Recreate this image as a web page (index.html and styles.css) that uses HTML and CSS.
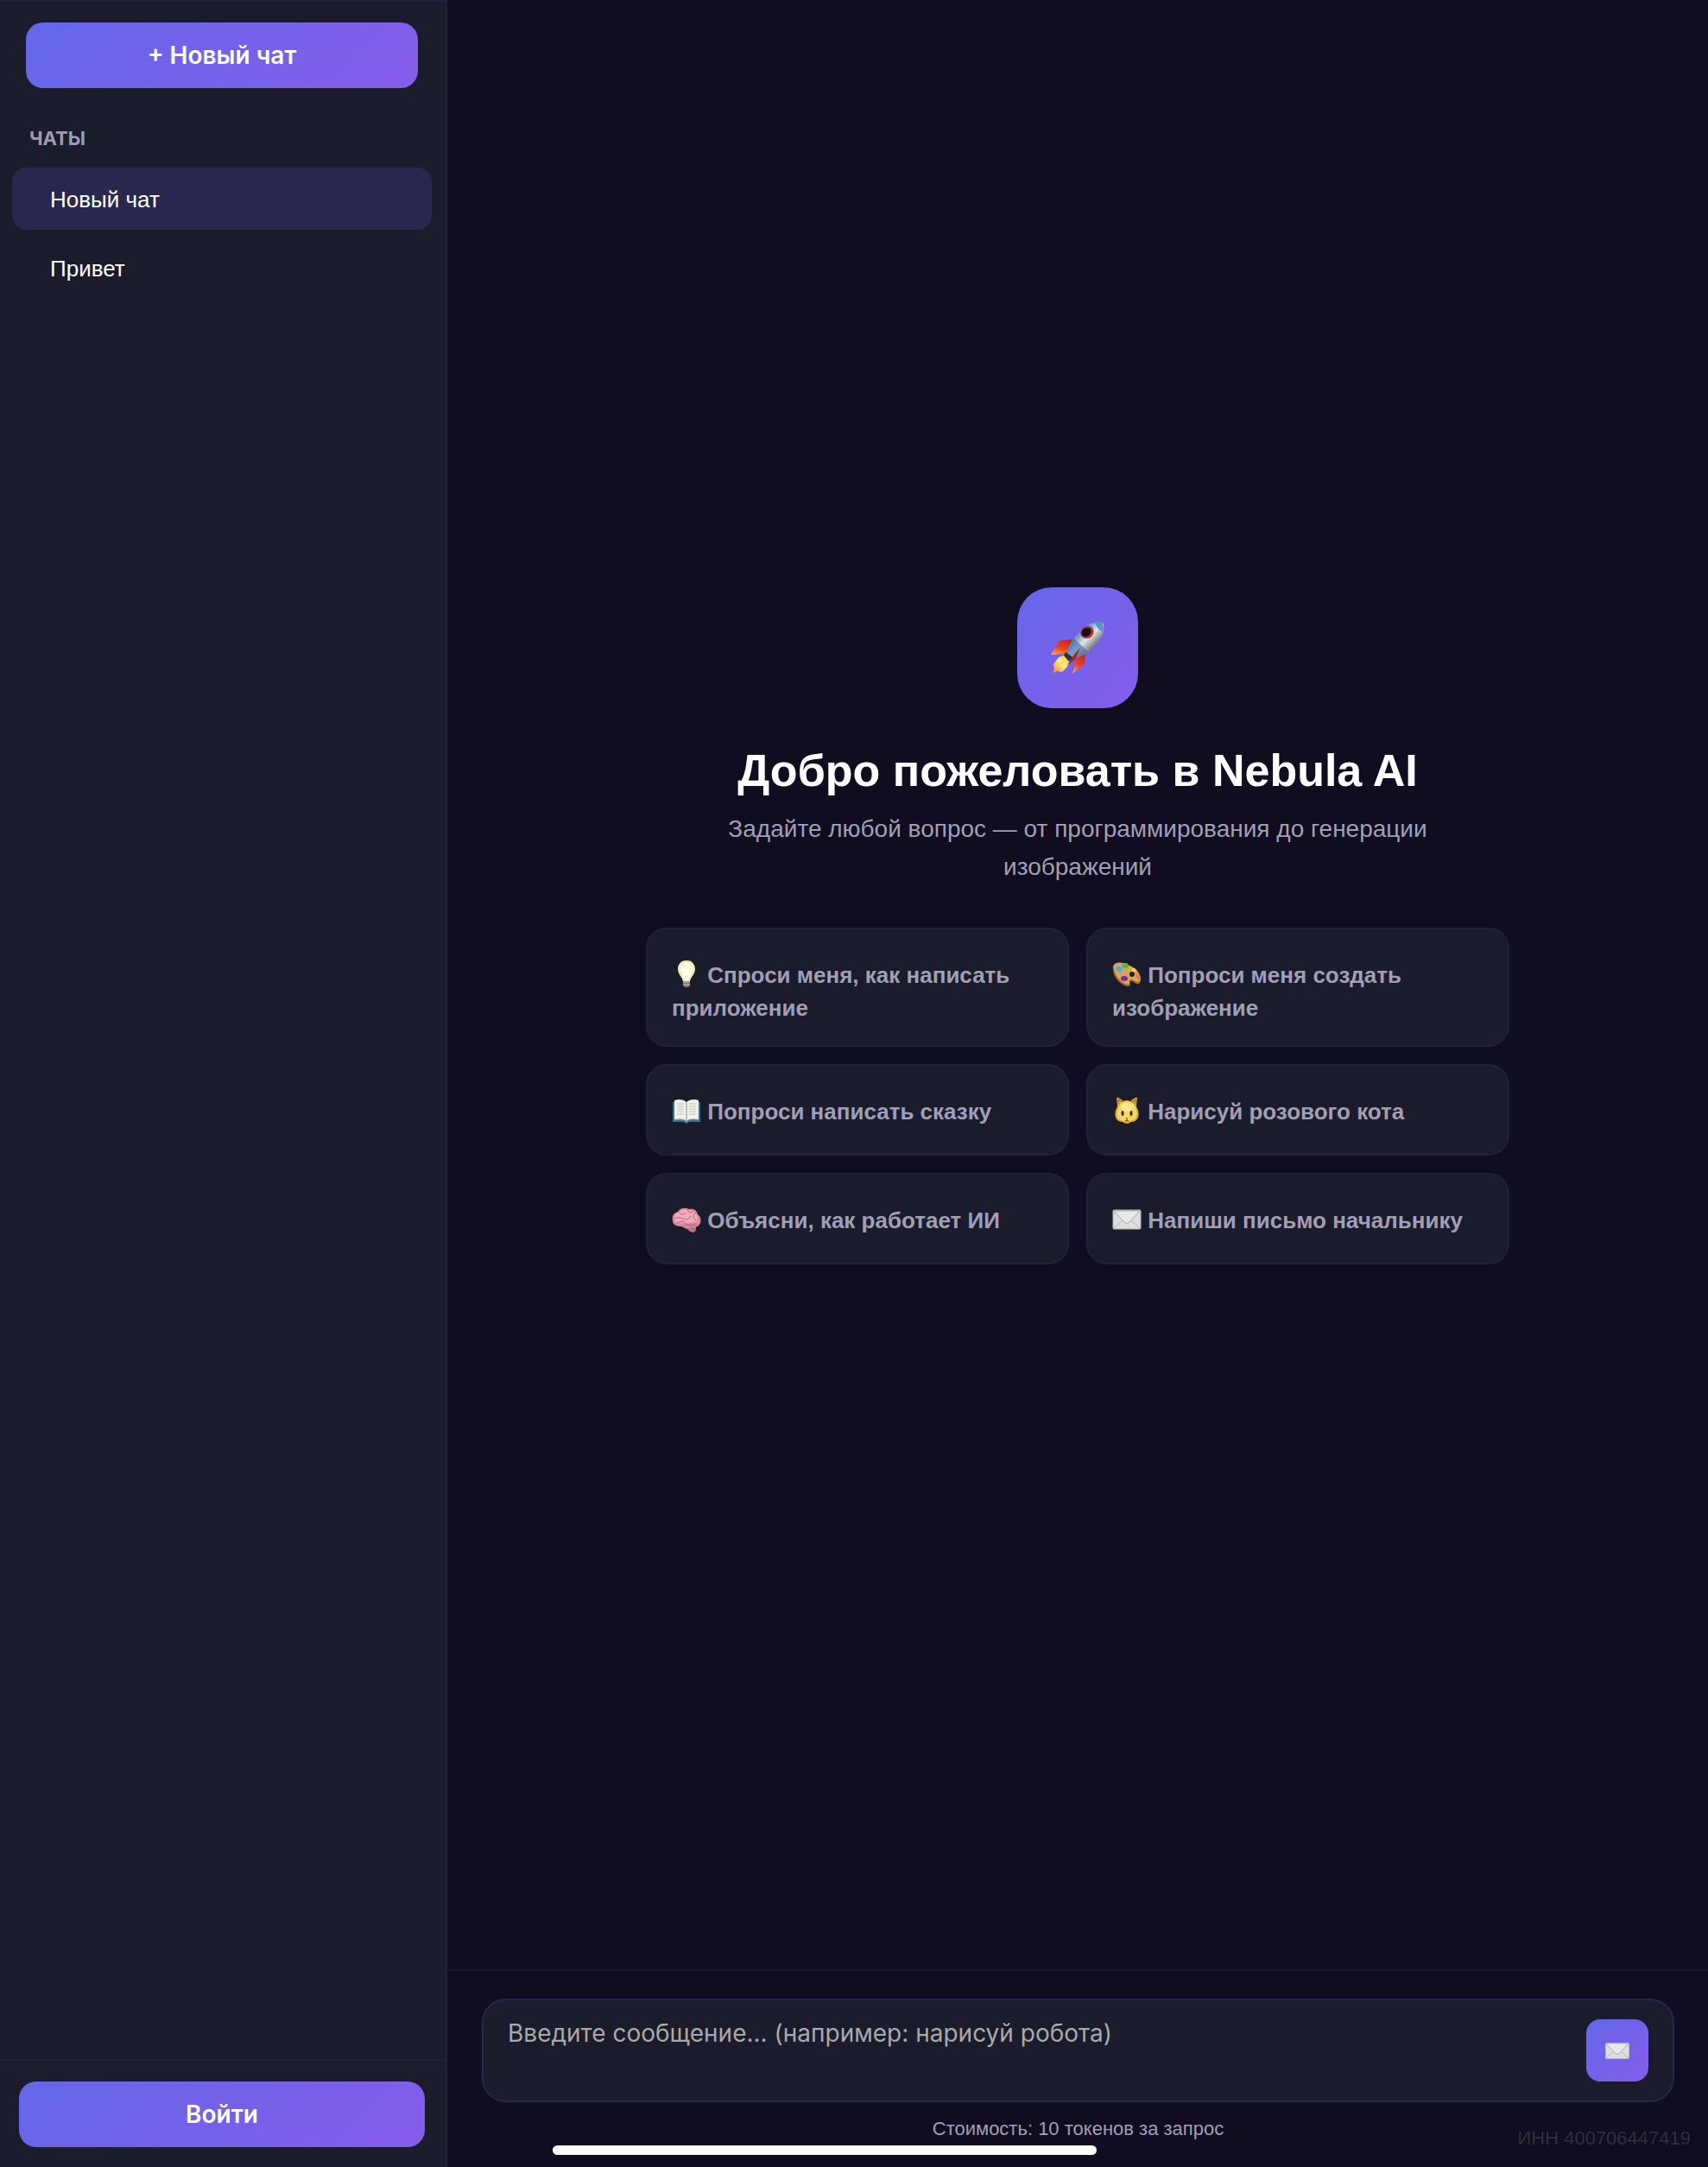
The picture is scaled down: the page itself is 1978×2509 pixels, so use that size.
FILE: index.html
```html
<!DOCTYPE html>
<html lang="ru">
  <head>
    <meta charset="UTF-8" />
    <meta name="viewport" content="width=device-width, initial-scale=1.0" />
    <title>Nebula AI</title>
    <link rel="stylesheet" href="styles.css">
  </head>
  <body>
    <aside class="sidebar">
      <button class="btn newChat" type="button">+ Новый чат</button>
      <h2 class="chatsTitle">ЧАТЫ</h2>
      <nav class="chatList">
        <button class="chatItem active" type="button">Новый чат</button>
        <button class="chatItem" type="button">Привет</button>
      </nav>
      <div class="sidebarFooter">
        <button class="btn login" type="button">Войти</button>
      </div>
    </aside>

    <main class="main">
      <section class="welcome">
        <div class="logo">
          <svg viewBox="0 0 64 62" aria-hidden="true">
            <defs>
              <linearGradient id="hull" x1="0.2" y1="0.2" x2="0.8" y2="0.8">
                <stop offset="0" stop-color="#355f9c" />
                <stop offset="0.3" stop-color="#7fa9d8" />
                <stop offset="0.5" stop-color="#e4e6e6" />
                <stop offset="0.75" stop-color="#8f979c" />
                <stop offset="1" stop-color="#37424d" />
              </linearGradient>
              <linearGradient id="fin" x1="0.7" y1="0" x2="0.2" y2="1">
                <stop offset="0" stop-color="#c92318" />
                <stop offset="0.6" stop-color="#ec4424" />
                <stop offset="1" stop-color="#ffa64d" />
              </linearGradient>
              <linearGradient id="fire" x1="1" y1="0" x2="0" y2="1">
                <stop offset="0" stop-color="#e9c43c" />
                <stop offset="0.5" stop-color="#ffe984" />
                <stop offset="1" stop-color="#f08a21" />
              </linearGradient>
            </defs>
            <path d="M27 21 11 23 1 39 19 38 24 31z" fill="url(#fin)" />
            <path d="M31 42 41 37 40 50 26 61z" fill="url(#fin)" />
            <path d="M18 39 10 42 4 50 5 56 3 60 8 58 14 59 19 54 24 46z" fill="url(#fire)" />
            <path d="M18 36 27 42 22 47 16 40z" fill="#26334a" />
            <path d="M20 37C22 25 31 13 43 5 50 1 59 0 61 2 64 6 62 16 56 24 49 34 40 41 28 43z" fill="url(#hull)" />
            <path d="M20 37C21 31 24 25 29 19 32 25 37 30 45 34 39 39 34 42 28 43z" fill="#3f73b0" opacity="0.65" />
            <path d="M51 1Q56 0 60 1 63 4 61 13 55 10 51 1z" fill="#5f93c6" />
            <path d="M29 19Q34 29 45 34" fill="none" stroke="#c8b46a" stroke-width="1" />
            <path d="M35 31 28 39 20 51 29 45z" fill="#b91c17" />
            <ellipse cx="43" cy="13" rx="8" ry="7" transform="rotate(-36 43 13)" fill="#c5302b" />
            <ellipse cx="42" cy="13" rx="6" ry="5" transform="rotate(-36 42 13)" fill="#11131b" />
          </svg>
        </div>
        <h1>Добро пожеловать в Nebula AI</h1>
        <p class="subtitle">Задайте любой вопрос — от программирования до генерации изображений</p>

        <div class="cards">
          <button class="card" type="button">
            <span>
              <svg class="emoji" viewBox="0 0 34 34" aria-hidden="true">
                <path d="M17 1C10 1 7 6 7 11 7 17 12 20 13 25H21C22 20 27 17 27 11 27 6 24 1 17 1z" fill="#f6e9ac" />
                <path d="M17 3C12 3 9 7 10 12 11 17 14 19 15 24H19C20 19 24 17 24 11 24 6 21 3 17 3z" fill="#fffce9" />
                <path d="M13 25H21V30L19 32H15L13 30z" fill="#777777" />
                <path d="M13 26H21M13 29H21" stroke="#c9c9c6" />
              </svg>
              Спроси меня, как написать приложение
            </span>
          </button>
          <button class="card" type="button">
            <span>
              <svg class="emoji" viewBox="0 0 34 34" aria-hidden="true">
                <path d="M2 6C7 1 19 5 27 12 33 17 34 23 32 27 30 31 26 26 22 25 18 24 24 31 18 31 10 30 1 20 1 12 0 9 1 7 2 6z" fill="#9b692c" />
                <path d="M3 5C8 1 19 5 27 11 32 16 34 21 32 25 30 28 26 24 22 23 17 23 23 29 18 29 11 28 2 18 2 10 1 8 2 6 3 5z" fill="#d7a65c" />
                <ellipse cx="15" cy="7" rx="4" ry="3" fill="#55b943" />
                <ellipse cx="8" cy="11" rx="4" ry="3" transform="rotate(35 8 11)" fill="#55a9dc" />
                <ellipse cx="14" cy="22" rx="4" ry="3" fill="#792da4" />
                <ellipse cx="25" cy="12" rx="3" ry="2" transform="rotate(35 25 12)" fill="#f1d64a" />
                <ellipse cx="30" cy="20" rx="2" ry="4" transform="rotate(-30 30 20)" fill="#ed755b" />
                <circle cx="23" cy="17" r="3" fill="#292021" />
              </svg>
              Попроси меня создать изображение
            </span>
          </button>
          <button class="card" type="button">
            <span>
              <svg class="emoji" viewBox="0 0 34 34" aria-hidden="true">
                <path d="M1 7H33V30H20L17 32 14 30H1z" fill="#39718c" />
                <path d="M3 5C8 3 14 4 17 7 20 4 26 3 31 5V27C25 26 20 26 17 29 14 26 9 26 3 27z" fill="#f1f1ee" />
                <path d="M17 7V29M3 28C9 27 14 27 17 30 20 27 25 27 31 28" fill="none" stroke="#8b9093" />
                <path d="M6 9H14M6 12H14M6 15H14M6 18H14M6 21H14M20 9H28M20 12H28M20 15H28M20 18H28M20 21H28" stroke="#c2c2c0" />
              </svg>
              Попроси написать сказку
            </span>
          </button>
          <button class="card" type="button">
            <span>
              <svg class="emoji" viewBox="0 0 34 34" aria-hidden="true">
                <path d="M6 12 5 2Q6 0 13 6 17 4 21 6 28 0 29 2L28 12Q32 19 30 25 28 30 22 30 20 32 17 32 14 32 12 30 6 30 4 25 2 19 6 12z" fill="#d2a638" />
                <path d="M8 12C10 6 14 6 17 6 21 6 25 8 27 13 30 19 29 24 26 27 22 30 12 30 8 27 4 23 5 17 8 12z" fill="#f3d665" />
                <ellipse cx="17" cy="13" rx="7" ry="5" fill="#fbe88a" />
                <path d="M7 9 7 4 12 7M27 9 27 4 22 7" fill="none" stroke="#8e6c2a" />
                <ellipse cx="12" cy="20" rx="1.5" ry="3" fill="#3c2d17" />
                <ellipse cx="22" cy="20" rx="1.5" ry="3" fill="#3c2d17" />
                <path d="M16 26H18L17 27zM17 27V28M15 28Q16 30 17 28 18 30 19 28" fill="none" stroke="#795321" />
              </svg>
              Нарисуй розового кота
            </span>
          </button>
          <button class="card" type="button">
            <span>
              <svg class="emoji" viewBox="0 0 34 34" aria-hidden="true">
                <path d="M22 23Q26 22 28 26 29 30 25 32 21 32 17 27z" fill="#bf6f75" />
                <path d="M1 18C0 12 3 9 7 8 10 3 16 3 20 5 26 4 29 7 30 11 34 14 35 20 31 24 28 27 23 26 20 27 16 29 13 25 11 25 4 25 1 22 1 18z" fill="#dd8ba0" />
                <path d="M3 14C4 10 8 9 9 8 13 4 17 5 20 7 25 6 28 9 29 13 31 18 27 21 23 20 18 23 14 20 9 21 4 21 2 18 3 14z" fill="#f2a9bb" />
                <path d="M3 16Q8 13 13 16T22 13M8 8Q12 14 16 9M17 5Q21 12 25 7M28 9Q22 13 28 18M5 22Q12 16 17 22T28 21M13 25Q20 21 29 24M24 26 27 31" fill="none" stroke="#b9677f" />
              </svg>
              Объясни, как работает ИИ
            </span>
          </button>
          <button class="card" type="button">
            <span>
              <svg class="emoji" viewBox="0 0 34 34" aria-hidden="true">
                <rect x="1" y="6" width="32" height="22" rx="1" fill="#dededf" stroke="#b4b4b4" />
                <path d="M2 27 13 17M32 27 21 17" stroke="#b9b9b9" />
                <path d="M2 7 14 20Q17 23 20 20L32 7z" fill="#e9e9e9" stroke="#a9a9aa" />
              </svg>
              Напиши письмо начальнику
            </span>
          </button>
        </div>
      </section>

      <form class="composer">
        <div class="inputBox">
          <textarea id="message" rows="2" aria-label="Сообщение" placeholder="Введите сообщение... (например: нарисуй робота)"></textarea>
          <button class="btn send" type="button" aria-label="Отправить">
            <svg viewBox="0 0 28 19" aria-hidden="true">
              <rect x="0.5" y="0.5" width="27" height="18" rx="1" fill="#dededf" stroke="#bcbcbe" />
              <path d="M1 18 11 9M27 18 17 9" stroke="#bababa" />
              <path d="M1 1 11 12Q14 15 17 12L27 1z" fill="#eaeaea" stroke="#acacae" />
            </svg>
          </button>
        </div>
        <p class="cost">Стоимость: 10 токенов за запрос</p>
      </form>
    </main>

    <div class="inn">ИНН 400706447419</div>
    <div class="homeBar"></div>
  </body>
</html>
```

FILE: styles.css
```css
* {
  box-sizing: border-box;
}
body {
  margin: 0;
  display: flex;
  min-height: 100vh;
  background: #0f0d1f;
  color: #fff;
  font-family: "Liberation Sans", Arial, sans-serif;
}
button,
textarea {
  font-family: inherit;
  border: none;
}
h1,
h2,
p {
  margin: 0;
}
.btn {
  height: 76px;
  color: #fff;
  font-family: Inter, sans-serif;
  font-size: 28px;
  font-weight: 600;
  border-radius: 20px;
  background: linear-gradient(135deg, #6467ea, #855ce9);
}

/* sidebar */
.sidebar {
  display: flex;
  flex-direction: column;
  flex: 0 0 518px;
  background: #1a1b2b;
  border-top: 2px solid #20203d;
  border-right: 2px solid #20203d;
}
.newChat {
  margin: 24px 32px 0 30px;
}
.chatsTitle {
  margin: 44px 34px 0;
  color: #9d9cb4;
  font-family: Inter, sans-serif;
  font-size: 22px;
  line-height: 28px;
}
.chatList {
  display: flex;
  flex-direction: column;
  gap: 8px;
  flex: 1;
  padding: 20px 16px 20px 14px;
}
.chatItem {
  height: 72px;
  padding: 2px 44px 0;
  color: #fff;
  font-size: 26px;
  text-align: left;
  border-radius: 16px;
  background: none;
}
.chatItem.active {
  background: #28284f;
}
.sidebarFooter {
  padding: 24px 24px 23px 22px;
  border-top: 2px solid #20203d;
}
.login {
  width: 100%;
}

/* main */
.main {
  display: flex;
  flex-direction: column;
  flex: 1;
  min-width: 0;
}
.welcome {
  display: flex;
  flex-direction: column;
  align-items: center;
  justify-content: center;
  flex: 1;
  padding: 0 40px 136px;
  text-align: center;
}
.logo {
  display: flex;
  align-items: center;
  justify-content: center;
  width: 140px;
  height: 140px;
  border-radius: 40px;
  background: linear-gradient(135deg, #6467ea, #855ce9);
}
.logo svg {
  width: 64px;
  height: 62px;
}
h1 {
  margin-top: 40px;
  font-size: 52px;
  line-height: 64px;
}
.subtitle {
  max-width: 900px;
  margin-top: 14px;
  color: #a09fb7;
  font-size: 28px;
  line-height: 44px;
}
.cards {
  display: grid;
  grid-template-columns: 1fr 1fr;
  gap: 20px;
  width: 100%;
  max-width: 1000px;
  margin-top: 48px;
}
.card {
  display: flex;
  align-items: flex-start;
  min-height: 106px;
  padding: 34px 28px 24px;
  color: #a09fb7;
  font-size: 26px;
  font-weight: bold;
  line-height: 38px;
  text-align: left;
  border: 2px solid #20203d;
  border-radius: 24px;
  background: #1a1b2b;
}
.emoji {
  width: 34px;
  height: 34px;
  vertical-align: -7px;
}

/* composer */
.composer {
  padding: 32px 39px 30px 40px;
  border-top: 2px solid #1a1934;
}
.inputBox {
  display: flex;
  align-items: center;
  gap: 20px;
  height: 120px;
  padding: 0 28px;
  border: 2px solid #27274d;
  border-radius: 28px;
  background: #1a1b2b;
}
.inputBox textarea {
  flex: 1;
  min-width: 0;
  height: 80px;
  padding: 0;
  color: #fff;
  font-family: Inter, sans-serif;
  font-size: 28px;
  line-height: 40px;
  resize: none;
  outline: none;
  background: none;
}
.inputBox textarea::placeholder {
  color: #a9a9a9;
}
.send {
  display: flex;
  align-items: center;
  justify-content: center;
  width: 72px;
  height: 72px;
  padding: 0;
  border-radius: 16px;
}
.send svg {
  width: 28px;
  height: 19px;
}
.cost {
  margin-top: 17px;
  color: #a09fb7;
  font-size: 22px;
  line-height: 28px;
  text-align: center;
}

/* fixed overlays */
.inn {
  position: fixed;
  right: 20px;
  bottom: 20px;
  color: #303037;
  font-size: 22px;
  line-height: 26px;
}
.homeBar {
  position: fixed;
  bottom: 14px;
  left: 50%;
  width: 630px;
  height: 11px;
  margin-left: -349px;
  border-radius: 6px;
  background: #fff;
}
```
